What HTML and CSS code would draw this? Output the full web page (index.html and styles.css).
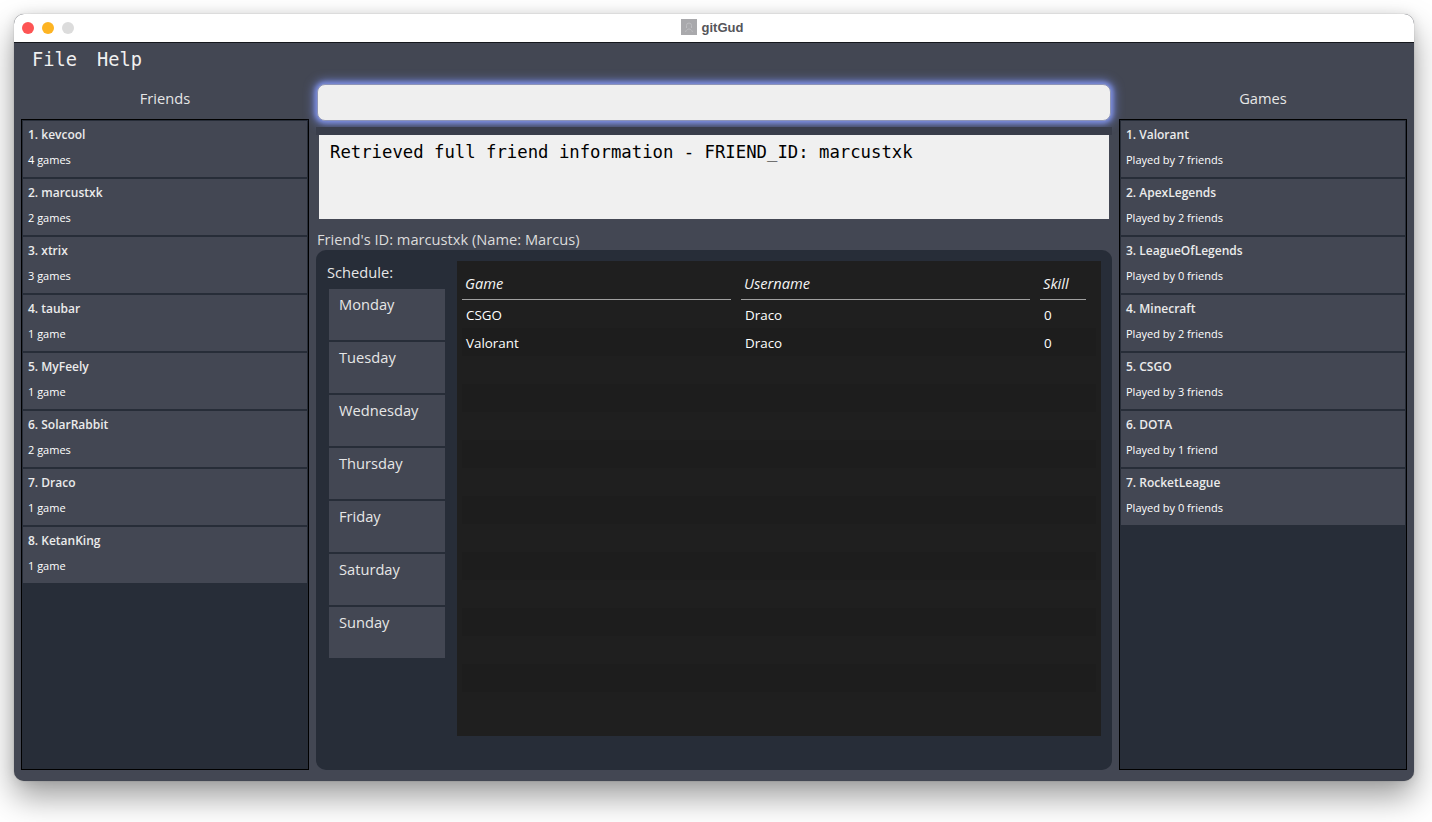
FILE: index.html
```html
<!DOCTYPE html>
<html lang="en">
<head>
    <meta charset="UTF-8">
    <title>gitGud</title>
    <link rel="stylesheet" href="styles.css">
</head>
<body>
    <div class="window">
        <div class="titlebar">
            <div class="lights">
                <span class="light red"></span>
                <span class="light yellow"></span>
                <span class="light grey"></span>
            </div>
            <div class="app-title">
                <svg class="app-icon" viewBox="0 0 16 16" width="16" height="16">
                    <rect width="16" height="16" fill="#a9a9ac"/>
                    <path d="M5.5 9V6.5a2.5 2.5 0 0 1 5 0V9" fill="none" stroke="#bdbdc0" stroke-width="1"/>
                    <path d="M4.5 13c.6-2 2-3 3.500-3s2.900 1 3.500 3" fill="none" stroke="#bdbdc0" stroke-width="1"/>
                </svg>
                <span>gitGud</span>
            </div>
        </div>

        <div class="menubar">
            <span class="menu-item">File</span>
            <span class="menu-item">Help</span>
        </div>

        <div class="columns">
            <div class="side">
                <div class="side-title">Friends</div>
                <div class="list">
                    <div class="card"><div class="card-name">1. kevcool</div><div class="card-sub">4 games</div></div>
                    <div class="card"><div class="card-name">2. marcustxk</div><div class="card-sub">2 games</div></div>
                    <div class="card"><div class="card-name">3. xtrix</div><div class="card-sub">3 games</div></div>
                    <div class="card"><div class="card-name">4. taubar</div><div class="card-sub">1 game</div></div>
                    <div class="card"><div class="card-name">5. MyFeely</div><div class="card-sub">1 game</div></div>
                    <div class="card"><div class="card-name">6. SolarRabbit</div><div class="card-sub">2 games</div></div>
                    <div class="card"><div class="card-name">7. Draco</div><div class="card-sub">1 game</div></div>
                    <div class="card"><div class="card-name">8. KetanKing</div><div class="card-sub">1 game</div></div>
                </div>
            </div>

            <div class="center">
                <div class="command-box"></div>
                <div class="result-strip">
                    <div class="result-box">Retrieved full friend information - FRIEND_ID: marcustxk</div>
                </div>
                <div class="friend-title">Friend's ID: marcustxk (Name: Marcus)</div>
                <div class="detail">
                    <div class="schedule">
                        <div class="schedule-title">Schedule:</div>
                        <div class="day">Monday</div>
                        <div class="day">Tuesday</div>
                        <div class="day">Wednesday</div>
                        <div class="day">Thursday</div>
                        <div class="day">Friday</div>
                        <div class="day">Saturday</div>
                        <div class="day">Sunday</div>
                    </div>
                    <div class="table">
                        <div class="thead">
                            <div class="th col-game">Game</div>
                            <div class="th col-user">Username</div>
                            <div class="th col-skill">Skill</div>
                        </div>
                        <div class="row"><div class="td col-game">CSGO</div><div class="td col-user">Draco</div><div class="td col-skill">0</div></div>
                        <div class="row"><div class="td col-game">Valorant</div><div class="td col-user">Draco</div><div class="td col-skill">0</div></div>
                        <div class="row"></div><div class="row"></div><div class="row"></div>
                        <div class="row"></div><div class="row"></div><div class="row"></div>
                        <div class="row"></div><div class="row"></div><div class="row"></div>
                        <div class="row"></div><div class="row"></div><div class="row"></div>
                    </div>
                </div>
            </div>

            <div class="side">
                <div class="side-title">Games</div>
                <div class="list">
                    <div class="card"><div class="card-name">1. Valorant</div><div class="card-sub">Played by 7 friends</div></div>
                    <div class="card"><div class="card-name">2. ApexLegends</div><div class="card-sub">Played by 2 friends</div></div>
                    <div class="card"><div class="card-name">3. LeagueOfLegends</div><div class="card-sub">Played by 0 friends</div></div>
                    <div class="card"><div class="card-name">4. Minecraft</div><div class="card-sub">Played by 2 friends</div></div>
                    <div class="card"><div class="card-name">5. CSGO</div><div class="card-sub">Played by 3 friends</div></div>
                    <div class="card"><div class="card-name">6. DOTA</div><div class="card-sub">Played by 1 friend</div></div>
                    <div class="card"><div class="card-name">7. RocketLeague</div><div class="card-sub">Played by 0 friends</div></div>
                </div>
            </div>
        </div>
    </div>
</body>
</html>
```

FILE: styles.css
```css
html, body {
    height: 100%;
}

body {
    margin: 0;
    padding: 14px 18px 0 14px;
    box-sizing: border-box;
    overflow: hidden;
    background-color: #fff;
    font-family: "Open Sans", sans-serif;
}

.window {
    width: 1400px;
    height: 767px;
    display: flex;
    flex-direction: column;
    border-radius: 10px;
    overflow: hidden;
    background-color: #434753;
    box-shadow: 0 0 1px rgba(0, 0, 0, 0.4), 0 0 12px rgba(0, 0, 0, 0.1), 0 16px 32px rgba(0, 0, 0, 0.38);
}

.titlebar {
    height: 29px;
    flex: none;
    display: flex;
    align-items: center;
    justify-content: center;
    position: relative;
    padding-bottom: 2px;
    background-color: #fff;
    border-bottom: 1px solid #16181d;
    box-sizing: border-box;
}

.lights {
    position: absolute;
    left: 8px;
    top: 8px;
    display: flex;
    gap: 8px;
}

.light {
    width: 12px;
    height: 12px;
    border-radius: 50%;
}

.red { background-color: #fd5454; }
.yellow { background-color: #fdb423; }
.grey { background-color: #dcdcdc; }

.app-title {
    display: flex;
    align-items: center;
    gap: 5px;
    padding-right: 4px;
    font-family: "Liberation Sans", Arial, sans-serif;
    font-size: 13px;
    font-weight: bold;
    color: #55555a;
}

.menubar {
    height: 35px;
    flex: none;
    display: flex;
    align-items: center;
    gap: 20px;
    padding: 0 18px 2px;
    box-sizing: border-box;
    font-family: "DejaVu Sans Mono", monospace;
    font-size: 18.7px;
    color: #f0f0f0;
}

.columns {
    flex: 1;
    min-height: 0;
    display: flex;
    gap: 7px;
    padding: 0 7px 11px;
}

.side {
    width: 288px;
    flex: none;
    display: flex;
    flex-direction: column;
}

.side-title {
    height: 41px;
    flex: none;
    display: flex;
    align-items: center;
    justify-content: center;
    padding-bottom: 2px;
    box-sizing: border-box;
    font-size: 14.67px;
    color: #e6e6e6;
}

.list {
    flex: 1;
    padding: 1px;
    border: 1px solid #000;
    background-color: #272d38;
}

.card {
    height: 56px;
    margin-bottom: 2px;
    padding: 0 5px;
    background-color: #434753;
    color: #fff;
}

.card-name {
    padding-top: 5px;
    line-height: 18px;
    font-size: 12px;
    font-weight: 600;
    color: #ebebeb;
}

.card-sub {
    padding-top: 7px;
    line-height: 18px;
    font-size: 11px;
}

.center {
    width: 796px;
    flex: none;
    display: flex;
    flex-direction: column;
    padding-top: 6px;
}

.command-box {
    height: 37px;
    flex: none;
    margin: 0 1px;
    box-sizing: border-box;
    background-color: #efefef;
    border: 1px solid #8d94b8;
    border-radius: 8px;
    box-shadow: 0 0 4px 2px #7c8ede, 0 0 10px 4px rgba(110, 125, 200, 0.8);
}

.result-strip {
    flex: none;
    margin-top: 6px;
    padding: 8px 3px 0;
    background: linear-gradient(#393d4a, #393d4a 8px, #434753 8px);
}

.result-box {
    height: 84px;
    box-sizing: border-box;
    padding: 7px 11px;
    background-color: #f0f0f0;
    font-family: "DejaVu Sans Mono", monospace;
    font-size: 17.3px;
    color: #000;
}

.friend-title {
    flex: none;
    height: 31px;
    padding: 10px 0 0 1px;
    box-sizing: border-box;
    font-size: 14.67px;
    line-height: 20px;
    color: #dcdcdc;
}

.detail {
    flex: 1;
    min-height: 0;
    display: flex;
    padding: 11px 11px 34px 11px;
    border-radius: 10px;
    background-color: #272d38;
}

.schedule {
    width: 130px;
    flex: none;
    color: #e6e6e6;
}

.schedule-title {
    height: 28px;
    font-size: 14.67px;
    line-height: 22px;
}

.day {
    height: 51px;
    margin: 0 0 2px 2px;
    width: 116px;
    padding: 5px 10px;
    box-sizing: border-box;
    background-color: #434753;
    font-size: 14.67px;
    line-height: 20px;
}

.table {
    flex: 1;
    min-width: 0;
    overflow: hidden;
    padding: 0 5px;
    background-color: #1f1f1f;
    color: #fff;
    font-size: 13.4px;
}

.thead {
    display: flex;
    height: 39px;
    box-sizing: border-box;
}

.th {
    font-style: italic;
    font-size: 14.67px;
    line-height: 20px;
    padding: 12px 0 0 3px;
    box-sizing: border-box;
    border-bottom: 1px solid #a0a0a0;
    color: #f4f4f4;
}

.row {
    display: flex;
    height: 28px;
    padding-top: 2px;
    box-sizing: border-box;
    align-items: center;
}

.row:nth-child(odd) {
    background-color: #1d1d1d;
}

.col-game { width: 269px; margin-right: 10px; }
.col-user { width: 289px; margin-right: 10px; }
.col-skill { width: 46px; }

.td {
    padding-left: 4px;
    box-sizing: border-box;
}
```
